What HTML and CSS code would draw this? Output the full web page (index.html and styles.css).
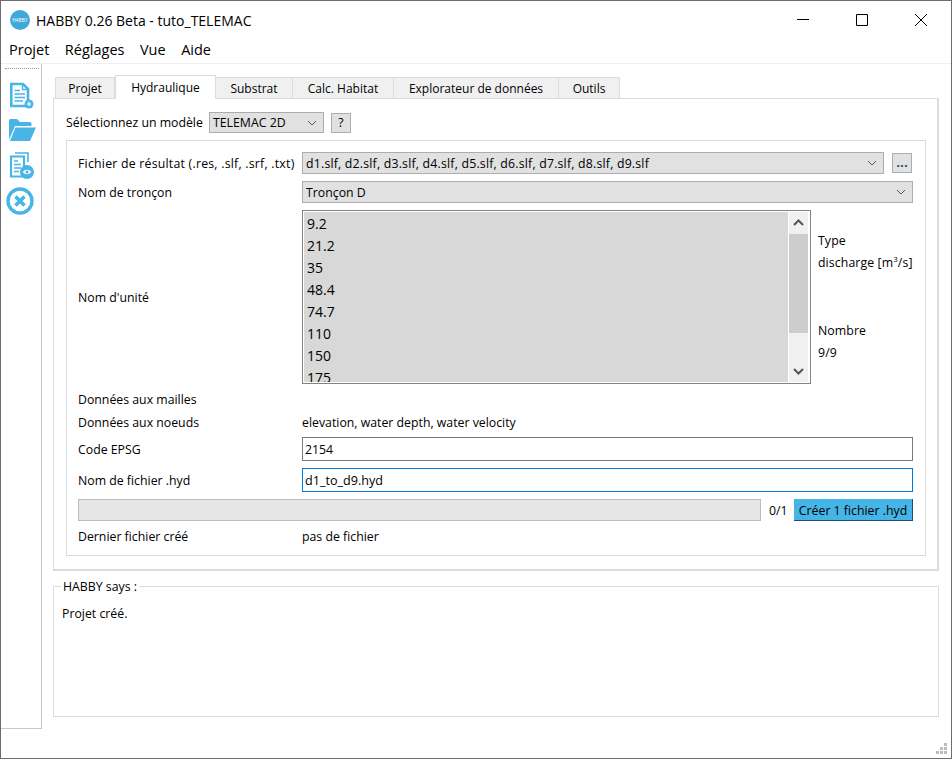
FILE: index.html
```html
<!DOCTYPE html>
<html>
	<head>
		<meta charset="UTF-8">
		<title>HABBY 0.26 Beta - tuto_TELEMAC</title>
		<link rel="stylesheet" href="styles.css">
	</head>
	<body>
		<div class="window">
			<div class="titlebar">
				<svg class="logo" width="20" height="20" viewBox="0 0 20 20">
					<circle cx="10" cy="10" r="10" fill="#3fa9d8"/>
					<text x="10" y="11.5" font-size="4.6" text-anchor="middle" fill="#fff" font-family="Liberation Sans">HABBY</text>
				</svg>
				<span class="title">HABBY 0.26 Beta - tuto_TELEMAC</span>
				<div class="winbtns">
					<svg width="14" height="14" viewBox="0 0 14 14"><path d="M1 6.5H13" stroke="#000" fill="none"/></svg>
					<svg width="14" height="14" viewBox="0 0 14 14"><path d="M1.5 1.5H12.5V12.5H1.5Z" stroke="#000" fill="none"/></svg>
					<svg width="14" height="14" viewBox="0 0 14 14"><path d="M1 1L13 13M13 1L1 13" stroke="#000" fill="none"/></svg>
				</div>
			</div>
			<div class="menubar">
				<span>Projet</span>
				<span>Réglages</span>
				<span>Vue</span>
				<span>Aide</span>
			</div>
			<div class="main">
				<div class="toolbar">
					<div class="grip"></div>
					<svg class="tool tool-new" width="24" height="27" viewBox="0 0 24 27">
						<path d="M1.300 2H13L18 7V24H1.300Z" fill="#fff" stroke="#48b5e6" stroke-width="2.600"/>
						<path d="M12.500 2V7.500H18" fill="none" stroke="#48b5e6" stroke-width="1.400"/>
						<path d="M4.500 8.500H10M4.500 12H15M4.500 15.500H15M4.500 19H13" stroke="#48b5e6" stroke-width="1.700"/>
						<circle cx="19" cy="22" r="4.500" fill="#48b5e6"/>
						<path d="M16.800 22H21.200M19 19.800V24.200" stroke="#fff" stroke-width="1.200"/>
					</svg>
					<svg class="tool tool-open" width="28" height="24" viewBox="0 0 28 24">
						<path d="M1 22V2.500Q1 1 2.500 1H9L12 4H22Q23.500 4 23.500 5.500V8H7L1 22Z" fill="#48b5e6"/>
						<path d="M7.500 9.500H28L22 23H2Z" fill="#48b5e6"/>
					</svg>
					<svg class="tool tool-view" width="26" height="28" viewBox="0 0 26 28">
						<path d="M6 1H19V10" fill="none" stroke="#48b5e6" stroke-width="1.600"/>
						<path d="M2 4.500H15V24.500H2Z" fill="#fff" stroke="#48b5e6" stroke-width="2.200"/>
						<path d="M5 9H9M5 12.500H12M5 16H12M5 19.500H10" stroke="#48b5e6" stroke-width="1.600"/>
						<circle cx="18" cy="20" r="7" fill="#48b5e6"/>
						<path d="M13.500 20Q18 15.500 22.500 20Q18 24.500 13.500 20Z" fill="#fff"/>
						<circle cx="18" cy="20" r="1.500" fill="#48b5e6"/>
					</svg>
					<svg class="tool tool-close" width="28" height="28" viewBox="0 0 28 28">
						<circle cx="14" cy="14" r="12" fill="#fff" stroke="#48b5e6" stroke-width="3.400"/>
						<path d="M9.500 9.500L18.500 18.500M18.500 9.500L9.500 18.500" stroke="#48b5e6" stroke-width="3.600"/>
					</svg>
				</div>
				<div class="content">
					<div class="tabs">
						<div class="tab tab-projet">Projet</div>
						<div class="tab tab-active">Hydraulique</div>
						<div class="tab tab-substrat">Substrat</div>
						<div class="tab tab-calc">Calc. Habitat</div>
						<div class="tab tab-explo">Explorateur de données</div>
						<div class="tab tab-outils">Outils</div>
					</div>
					<div class="pane">
						<div class="model-row">
							<span class="model-label">Sélectionnez un modèle</span>
							<div class="combo combo-model">
								<span>TELEMAC 2D</span>
								<svg class="chevron" width="10" height="6" viewBox="0 0 10 6"><path d="M1 1L5 5L9 1" fill="none" stroke="#555"/></svg>
							</div>
							<div class="btn btn-help">?</div>
						</div>
						<div class="group">
							<div class="label label-file">Fichier de résultat (.res, .slf, .srf, .txt)</div>
							<div class="file-row">
								<div class="combo combo-grow">
									<span class="file-list">d1.slf, d2.slf, d3.slf, d4.slf, d5.slf, d6.slf, d7.slf, d8.slf, d9.slf</span>
									<svg class="chevron" width="10" height="6" viewBox="0 0 10 6"><path d="M1 1L5 5L9 1" fill="none" stroke="#555"/></svg>
								</div>
								<div class="btn btn-more">...</div>
							</div>

							<div class="label">Nom de tronçon</div>
							<div class="combo">
								<span>Tronçon D</span>
								<svg class="chevron" width="10" height="6" viewBox="0 0 10 6"><path d="M1 1L5 5L9 1" fill="none" stroke="#555"/></svg>
							</div>

							<div class="label">Nom d'unité</div>
							<div class="unit-row">
								<div class="list">
									<div class="list-items">
										<div class="item">9.2</div>
										<div class="item">21.2</div>
										<div class="item">35</div>
										<div class="item">48.4</div>
										<div class="item">74.7</div>
										<div class="item">110</div>
										<div class="item">150</div>
										<div class="item">175</div>
									</div>
									<div class="scroll">
										<svg width="19" height="22" viewBox="0 0 19 22"><path d="M5 13L9.500 8.500L14 13" fill="none" stroke="#555" stroke-width="2"/></svg>
										<div class="thumb"></div>
										<div class="scroll-rest"></div>
										<svg width="19" height="22" viewBox="0 0 19 22"><path d="M5 9L9.500 13.500L14 9" fill="none" stroke="#555" stroke-width="2"/></svg>
									</div>
								</div>
								<div class="unit-info">
									<div>
										<p>Type</p>
										<p>discharge [m<sup>3</sup>/s]</p>
									</div>
									<div>
										<p>Nombre</p>
										<p>9/9</p>
									</div>
								</div>
							</div>

							<div class="label">Données aux mailles</div>
							<div class="label"></div>

							<div class="label">Données aux noeuds</div>
							<div class="label">elevation, water depth, water velocity</div>

							<div class="label">Code EPSG</div>
							<input class="field" type="text" value="2154">

							<div class="label">Nom de fichier .hyd</div>
							<input class="field field-focus" type="text" value="d1_to_d9.hyd">

							<div class="progress-row">
								<div class="progress"></div>
								<span class="progress-count">0/1</span>
								<div class="btn-create">Créer 1 fichier .hyd</div>
							</div>

							<div class="label">Dernier fichier créé</div>
							<div class="label">pas de fichier</div>
						</div>
					</div>
					<fieldset class="log">
						<legend>HABBY says :</legend>
						<p>Projet créé.</p>
					</fieldset>
				</div>
			</div>
			<div class="sizegrip">
				<i></i><i></i><i></i><i></i><i></i><i></i>
			</div>
		</div>
	</body>
</html>
```

FILE: styles.css
```css
* {
	box-sizing: border-box;
}
html, body {
	margin: 0;
	height: 100%;
}
body {
	font-family: "Open Sans", "Noto Sans", sans-serif;
	font-size: 12.3px;
	color: #000;
	background: #fff;
}
p {
	margin: 0;
}
.window {
	width: 952px;
	height: 759px;
	border: 1px solid #6d6d6d;
	display: flex;
	flex-direction: column;
	position: relative;
	overflow: hidden;
}

/* title + menu */
.titlebar {
	height: 38px;
	display: flex;
	align-items: center;
	padding-left: 9px;
	flex: none;
}
.logo {
	margin-right: 6px;
}
.title {
	font-size: 14px;
}
.winbtns {
	margin-left: auto;
	display: flex;
	gap: 45px;
	padding-right: 23px;
}
.menubar {
	height: 25px;
	flex: none;
	display: flex;
	gap: 15.500px;
	padding: 1px 0 0 8px;
	font-size: 14.500px;
	border-bottom: 1px solid #f0f0f0;
}
.main {
	flex: none;
	display: flex;
}

/* left toolbar */
.toolbar {
	width: 41px;
	height: 665px;
	flex: none;
	border-right: 1px solid #c8c8c8;
	border-bottom: 1px solid #c8c8c8;
	display: flex;
	flex-direction: column;
	align-items: flex-start;
	padding-top: 4px;
}
.grip {
	width: 34px;
	margin-left: 4px;
	border-top: 1px dotted #999;
}
.tool {
	display: block;
}
.tool-new {
	margin: 13px 0 0 9px;
}
.tool-open {
	margin: 9px 0 0 7px;
}
.tool-view {
	margin: 10px 0 0 8px;
}
.tool-close {
	margin: 7px 0 0 5px;
}

/* tabs */
.content {
	width: 898px;
	padding: 11px 0 0 11px;
}
.tabs {
	display: flex;
	padding-left: 2px;
	height: 24px;
	align-items: flex-end;
	position: relative;
	z-index: 1;
	margin-bottom: -1px;
	font-size: 12px;
}
.tab {
	height: 22px;
	background: #f0f0f0;
	border: 1px solid #dcdcdc;
	border-left: 0;
	display: flex;
	align-items: center;
	justify-content: center;
	padding-top: 1px;
}
.tab-projet {
	width: 60px;
	border-left: 1px solid #dcdcdc;
}
.tab-active {
	width: 101px;
	height: 24px;
	background: #fff;
	border-left: 1px solid #dcdcdc;
	border-bottom: 0;
	padding: 0 0 1px;
}
.tab-substrat {
	width: 77px;
}
.tab-calc {
	width: 101px;
}
.tab-explo {
	width: 165px;
}
.tab-outils {
	width: 61px;
}
.pane {
	width: 886px;
	height: 473px;
	border: 1px solid #dcdcdc;
	border-right-width: 2px;
	border-bottom-width: 2px;
	padding: 13px 0 0 12px;
}
.model-row {
	display: flex;
	align-items: center;
	height: 21px;
}
.model-label {
	width: 143px;
}
.combo {
	height: 22px;
	background: #e1e1e1;
	border: 1px solid #adadad;
	display: flex;
	align-items: center;
	justify-content: space-between;
	padding: 0 6px 0 3px;
}
.combo-model {
	width: 115px;
	height: 21px;
	margin-right: 7px;
}
.combo-grow {
	flex: 1;
}
.file-list {
	letter-spacing: .2px;
}
.chevron {
	flex: none;
}
.btn {
	width: 20px;
	height: 20px;
	background: #e1e1e1;
	border: 1px solid #adadad;
	display: flex;
	align-items: center;
	justify-content: center;
}
.btn-help {
	height: 20px;
}

/* hydraulic form */
.group {
	width: 860px;
	height: 416px;
	margin-top: 7px;
	border: 1px solid #dcdcdc;
	padding: 11px 11px 0 11px;
	display: grid;
	grid-template-columns: 224px 611px;
	grid-template-rows: 22px 22px 174px 16px 16px 24px 24px 22px 16px;
	row-gap: 7px;
}
.label {
	display: flex;
	align-items: center;
	white-space: nowrap;
}
.label-file {
	letter-spacing: .23px;
}
.file-row {
	display: flex;
	gap: 8px;
	padding-right: 1px;
}
.btn-more {
	height: 20px;
	margin-top: 1px;
	padding-bottom: 4px;
	flex: none;
	font-size: 14px;
	font-weight: 600;
	color: #0b3a66;
}
.unit-row {
	display: flex;
	height: 174px;
}
.list {
	width: 509px;
	height: 174px;
	flex: none;
	border: 1px solid #828282;
	padding: 1px 2px 1px 1px;
	display: flex;
	overflow: hidden;
}
.list-items {
	flex: 1;
	background: #d8d8d8;
	font-size: 14px;
	overflow: hidden;
	padding: 1px 0 0 3px;
}
.item {
	height: 22px;
	line-height: 22px;
}
.scroll {
	width: 19px;
	margin-left: 1px;
	background: #f0f0f0;
	display: flex;
	flex-direction: column;
}
.scroll svg {
	flex: none;
	display: block;
}
.thumb {
	height: 99px;
	background: #cdcdcd;
	flex: none;
}
.scroll-rest {
	flex: 1;
}
.unit-info {
	padding: 20px 0 0 7px;
	letter-spacing: .1px;
}
.unit-info p {
	height: 22px;
	line-height: 22px;
	white-space: nowrap;
}
.unit-info div + div {
	margin-top: 46px;
}
.unit-info sup {
	font-size: 8px;
	line-height: 0;
}
.field {
	height: 24px;
	width: 611px;
	border: 1px solid #7a7a7a;
	background: #fff;
	padding: 0 2px;
	font: inherit;
	color: #000;
	outline: 0;
}
.field-focus {
	border-color: #0078d7;
	font-size: 12.600px;
}
.progress-row {
	grid-column: 1 / 3;
	display: flex;
	align-items: center;
}
.progress {
	width: 683px;
	height: 22px;
	background: #e6e6e6;
	border: 1px solid #bcbcbc;
}
.progress-count {
	width: 33px;
	padding-left: 8px;
}
.btn-create {
	width: 119px;
	height: 22px;
	background: #45b4e7;
	border-right: 1px solid #1f4e66;
	border-bottom: 1px solid #1f4e66;
	display: flex;
	align-items: center;
	justify-content: center;
	padding-top: 1px;
}

/* log */
.log {
	width: 886px;
	height: 139px;
	margin: 7px 0 0 0;
	padding: 10px 8px 0 8px;
	border: 1px solid #dcdcdc;
}
.log legend {
	padding: 0 2px;
	margin-left: -1px;
}

.sizegrip {
	position: absolute;
	right: 3px;
	bottom: 3px;
	width: 12px;
	height: 12px;
	display: grid;
	grid-template-columns: repeat(3, 3px);
	grid-template-rows: repeat(3, 3px);
	gap: 1px;
}
.sizegrip i {
	background: #bcbcbc;
}
.sizegrip i:nth-child(1) {
	grid-area: 1 / 3;
}
.sizegrip i:nth-child(2) {
	grid-area: 2 / 2;
}
.sizegrip i:nth-child(3) {
	grid-area: 2 / 3;
}
.sizegrip i:nth-child(4) {
	grid-area: 3 / 1;
}
.sizegrip i:nth-child(5) {
	grid-area: 3 / 2;
}
.sizegrip i:nth-child(6) {
	grid-area: 3 / 3;
}
```
